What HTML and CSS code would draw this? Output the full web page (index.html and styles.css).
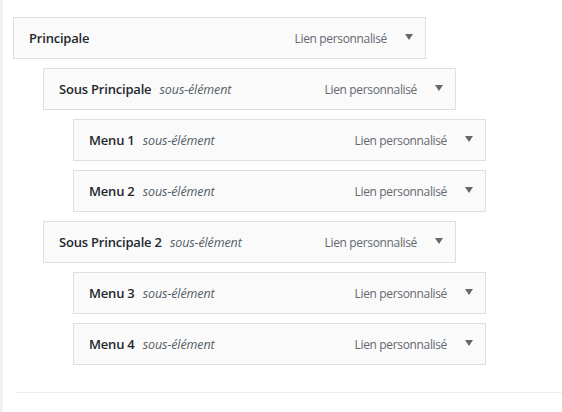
FILE: index.html
```html
<!DOCTYPE html>
<html lang="fr">
<head>
	<meta charset="UTF-8" />
	<meta name="viewport" content="width=device-width, initial-scale=1.0" />
	<title>Structure du menu</title>
	<link rel="stylesheet" href="styles.css">
</head>
<body>
<div id="menu-page">
	<ul class="menu">
		<li class="menu-item depth-0">
			<span class="item-title">Principale</span>
			<span class="item-controls">
				<span class="item-type">Lien personnalisé</span>
				<span class="item-edit"></span>
			</span>
		</li>
		<li class="menu-item depth-1">
			<span class="item-title">Sous Principale <em class="is-submenu">sous-élément</em></span>
			<span class="item-controls">
				<span class="item-type">Lien personnalisé</span>
				<span class="item-edit"></span>
			</span>
		</li>
		<li class="menu-item depth-2">
			<span class="item-title">Menu 1 <em class="is-submenu">sous-élément</em></span>
			<span class="item-controls">
				<span class="item-type">Lien personnalisé</span>
				<span class="item-edit"></span>
			</span>
		</li>
		<li class="menu-item depth-2">
			<span class="item-title">Menu 2 <em class="is-submenu">sous-élément</em></span>
			<span class="item-controls">
				<span class="item-type">Lien personnalisé</span>
				<span class="item-edit"></span>
			</span>
		</li>
		<li class="menu-item depth-1">
			<span class="item-title">Sous Principale 2 <em class="is-submenu">sous-élément</em></span>
			<span class="item-controls">
				<span class="item-type">Lien personnalisé</span>
				<span class="item-edit"></span>
			</span>
		</li>
		<li class="menu-item depth-2">
			<span class="item-title">Menu 3 <em class="is-submenu">sous-élément</em></span>
			<span class="item-controls">
				<span class="item-type">Lien personnalisé</span>
				<span class="item-edit"></span>
			</span>
		</li>
		<li class="menu-item depth-2">
			<span class="item-title">Menu 4 <em class="is-submenu">sous-élément</em></span>
			<span class="item-controls">
				<span class="item-type">Lien personnalisé</span>
				<span class="item-edit"></span>
			</span>
		</li>
	</ul>
	<div class="menu-footer"></div>
</div>
</body>
</html>
```

FILE: styles.css
```css
* {
	padding: 0;
	margin: 0;
	box-sizing: border-box;
}
html, body {
	width: 100%;
	height: 100%;
	background: #fff;
	font-family: "Open Sans", "Noto Sans", sans-serif;
	font-size: 13px;
	color: #23282d;
}
body {
	border-left: 3px solid #f1f1f1;
}
#menu-page {
	padding: 17px 0 0 10px;
}
.menu {
	list-style: none;
}
.menu-item {
	display: flex;
	align-items: center;
	justify-content: space-between;
	width: 413px;
	height: 42px;
	margin-bottom: 9px;
	padding: 0 12px 0 15px;
	background: #fafafa;
	border: 1px solid #dfdfdf;
}
.depth-1 {
	margin-left: 30px;
}
.depth-2 {
	margin-left: 60px;
}
.item-title {
	font-weight: 600;
	letter-spacing: -0.2px;
	white-space: nowrap;
}
.is-submenu {
	margin-left: 5px;
	font-size: 12.5px;
	font-weight: normal;
	letter-spacing: -0.1px;
	color: #555d66;
}
.item-controls {
	display: flex;
	align-items: center;
}
.item-type {
	font-size: 12px;
	letter-spacing: -0.35px;
	color: #646970;
	margin-right: 18px;
}
.item-edit {
	width: 0;
	height: 0;
	border-left: 4px solid transparent;
	border-right: 4px solid transparent;
	border-top: 6px solid #646970;
	margin-top: -2px;
}
.menu-footer {
	margin-top: 27px;
	margin-left: 2px;
	border-top: 1px solid #eee;
}
```
